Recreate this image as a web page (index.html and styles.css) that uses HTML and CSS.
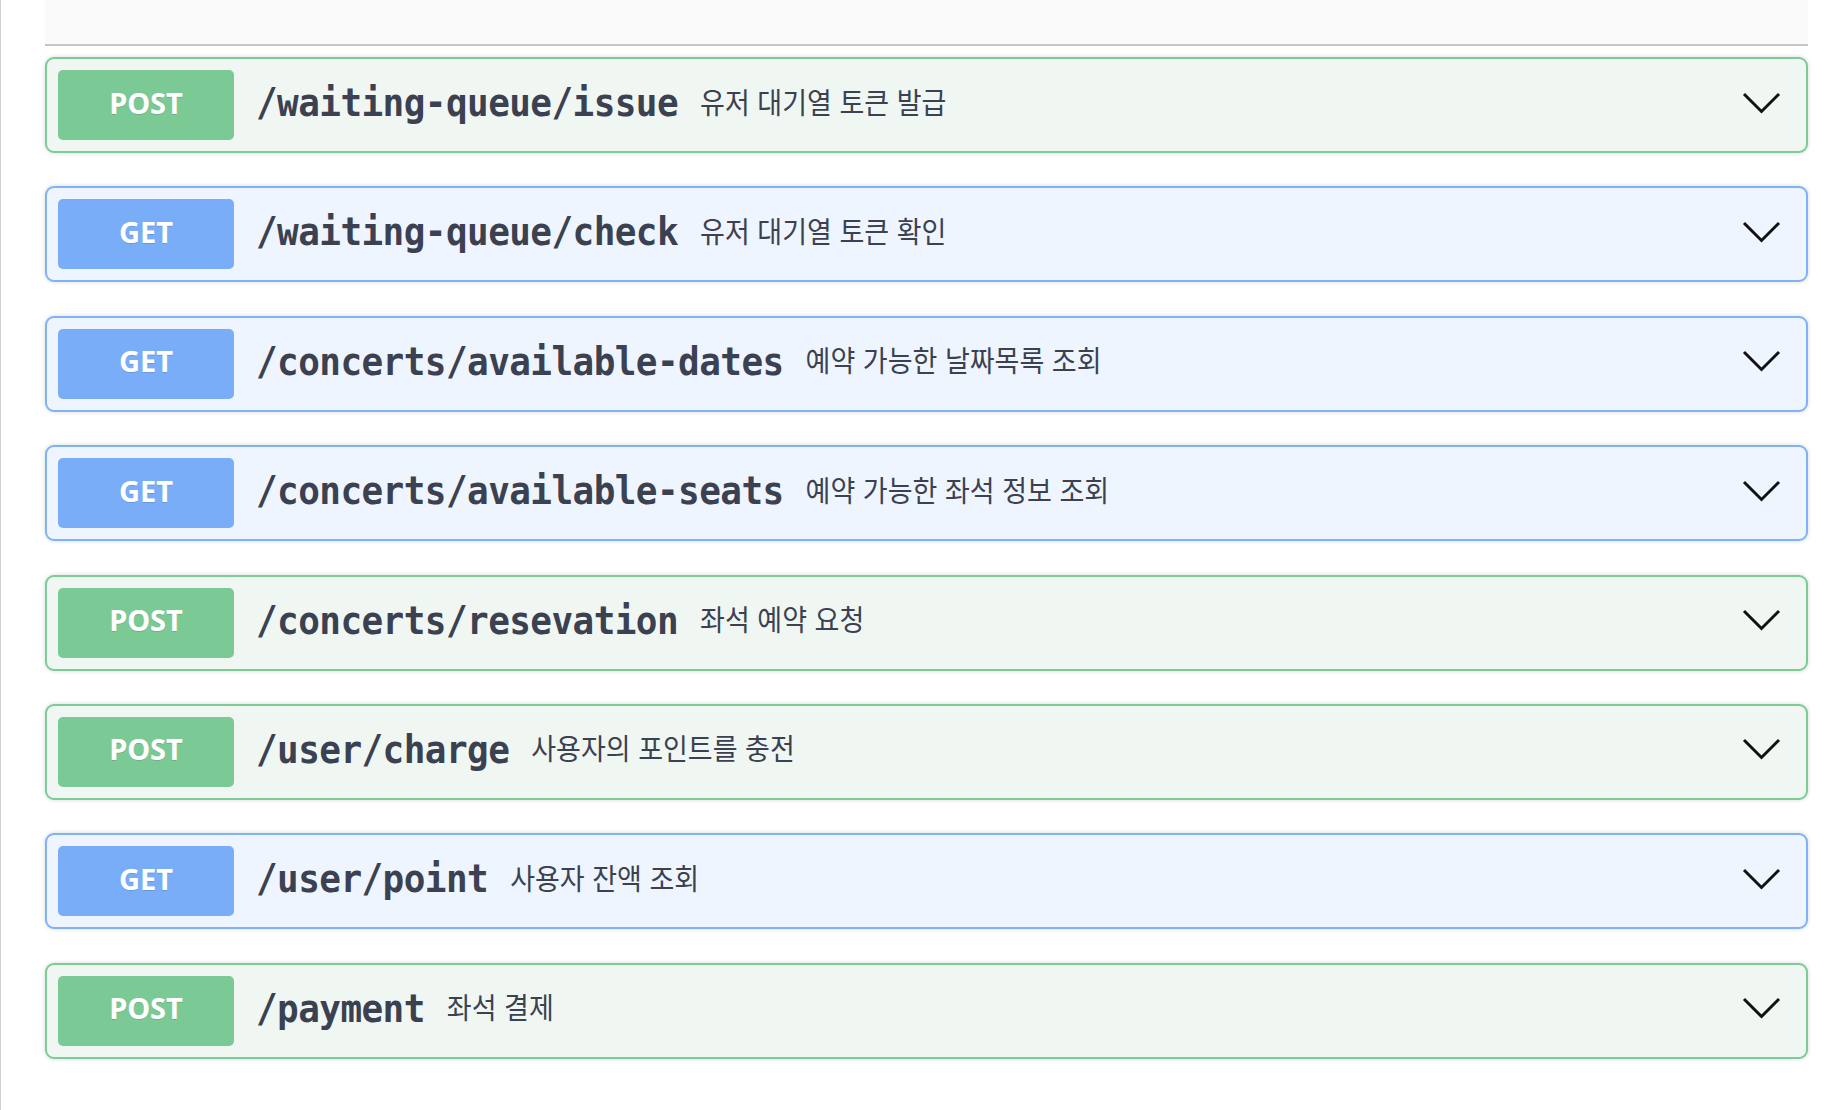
FILE: index.html
```html
<!DOCTYPE html>
<html lang="ko">
<head>
<meta charset="utf-8">
<title>API</title>
<link rel="stylesheet" href="styles.css">
</head>
<body>
<div class="page">
  <div class="tag-header"></div>
  <div class="ops">
    <div class="opblock post">
      <span class="method">POST</span>
      <span class="path">/waiting-queue/issue</span>
      <span class="desc">유저 대기열 토큰 발급</span>
      <svg class="arrow" viewBox="0 0 39 22" width="39" height="22"><polyline points="2,2 19.5,19.5 37,2"/></svg>
    </div>
    <div class="opblock get">
      <span class="method">GET</span>
      <span class="path">/waiting-queue/check</span>
      <span class="desc">유저 대기열 토큰 확인</span>
      <svg class="arrow" viewBox="0 0 39 22" width="39" height="22"><polyline points="2,2 19.5,19.5 37,2"/></svg>
    </div>
    <div class="opblock get">
      <span class="method">GET</span>
      <span class="path">/concerts/available-dates</span>
      <span class="desc">예약 가능한 날짜목록 조회</span>
      <svg class="arrow" viewBox="0 0 39 22" width="39" height="22"><polyline points="2,2 19.5,19.5 37,2"/></svg>
    </div>
    <div class="opblock get">
      <span class="method">GET</span>
      <span class="path">/concerts/available-seats</span>
      <span class="desc">예약 가능한 좌석 정보 조회</span>
      <svg class="arrow" viewBox="0 0 39 22" width="39" height="22"><polyline points="2,2 19.5,19.5 37,2"/></svg>
    </div>
    <div class="opblock post">
      <span class="method">POST</span>
      <span class="path">/concerts/resevation</span>
      <span class="desc">좌석 예약 요청</span>
      <svg class="arrow" viewBox="0 0 39 22" width="39" height="22"><polyline points="2,2 19.5,19.5 37,2"/></svg>
    </div>
    <div class="opblock post">
      <span class="method">POST</span>
      <span class="path">/user/charge</span>
      <span class="desc">사용자의 포인트를 충전</span>
      <svg class="arrow" viewBox="0 0 39 22" width="39" height="22"><polyline points="2,2 19.5,19.5 37,2"/></svg>
    </div>
    <div class="opblock get">
      <span class="method">GET</span>
      <span class="path">/user/point</span>
      <span class="desc">사용자 잔액 조회</span>
      <svg class="arrow" viewBox="0 0 39 22" width="39" height="22"><polyline points="2,2 19.5,19.5 37,2"/></svg>
    </div>
    <div class="opblock post">
      <span class="method">POST</span>
      <span class="path">/payment</span>
      <span class="desc">좌석 결제</span>
      <svg class="arrow" viewBox="0 0 39 22" width="39" height="22"><polyline points="2,2 19.5,19.5 37,2"/></svg>
    </div>
  </div>
</div>
</body>
</html>
```

FILE: styles.css
```css
html, body {
  margin: 0;
  padding: 0;
  background: #ffffff;
}

.page {
  min-height: 1110px;
  box-sizing: border-box;
  border-left: 1px solid #cfcfd2;
  padding: 0 32px 0 44px;
}

.tag-header {
  height: 44px;
  background: #fafafa;
  border-bottom: 2px solid #c4c5ca;
}

.ops {
  display: flex;
  flex-direction: column;
  gap: 33.4px;
  padding-top: 11px;
}

.opblock {
  box-sizing: border-box;
  height: 96px;
  display: flex;
  align-items: center;
  padding: 0 11px;
  border: 2px solid;
  border-radius: 9px;
  box-shadow: 0 0 4px rgba(0, 0, 0, 0.16);
}

.opblock.post {
  background: #f0f7f3;
  border-color: #7dcb97;
}

.opblock.get {
  background: #eff5fe;
  border-color: #80b2f7;
}

.method {
  flex: 0 0 auto;
  box-sizing: border-box;
  width: 176px;
  height: 70px;
  padding-bottom: 6px;
  border-radius: 5px;
  display: flex;
  align-items: center;
  justify-content: center;
  color: #ffffff;
  font-family: "Noto Sans", "Open Sans", sans-serif;
  font-weight: 700;
  font-size: 29px;
  text-shadow: 0 1px 0 rgba(0, 0, 0, 0.12);
}

.post .method {
  background: #7bc995;
}

.get .method {
  background: #7aadf8;
}

.path {
  padding: 0 22px;
  margin-bottom: 5px;
  font-family: "DejaVu Sans Mono", monospace;
  font-weight: 700;
  font-size: 36px;
  letter-spacing: -0.57px;
  color: #3b4151;
  white-space: nowrap;
  transform: scaleY(1.1);
}

.desc {
  flex: 1 1 auto;
  margin-bottom: 8px;
  font-family: "Noto Sans CJK KR", "Noto Sans", sans-serif;
  font-size: 27px;
  color: #3b4151;
  white-space: nowrap;
  transform: scaleY(1.08);
  transform-origin: left center;
}

.arrow {
  flex: 0 0 auto;
  margin-right: 14px;
  margin-top: -5px;
}

.arrow polyline {
  fill: none;
  stroke: #111111;
  stroke-width: 3;
  stroke-linejoin: miter;
}
```
